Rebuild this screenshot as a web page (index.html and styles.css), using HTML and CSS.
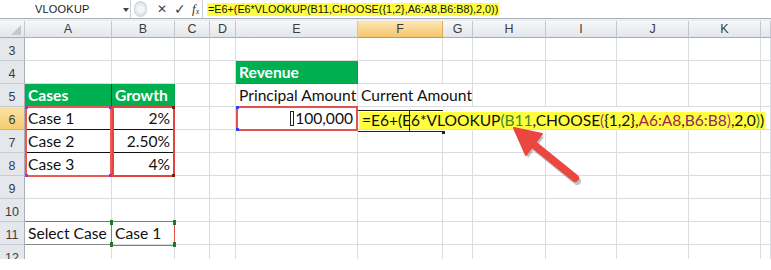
FILE: index.html
```html
<!DOCTYPE html>
<html>
<head>
<meta charset="utf-8">
<link rel="stylesheet" href="styles.css">
</head>
<body>
<div class="app">
  <div class="fbar">
    <div class="namebox"><span class="nm">VLOOKUP</span><span class="dd"></span></div>
    <div class="btns">
      <span class="grip"></span>
      <span class="b x">✕</span>
      <span class="b ok">✓</span>
      <span class="b fx"><i>f</i><sub>x</sub></span>
    </div>
    <div class="finput"><span class="hl">=E6+(E6*VLOOKUP(B11,CHOOSE({1,2},A6:A8,B6:B8),2,0))</span></div>
  </div>
  <div class="gapbar"></div>
  <div class="sheetwrap">
    <div class="sheet">
      <div class="ch corner"><span class="tri"></span></div><div class="ch">A</div><div class="ch">B</div><div class="ch">C</div><div class="ch">D</div><div class="ch">E</div><div class="ch sel">F</div><div class="ch">G</div><div class="ch">H</div><div class="ch">I</div><div class="ch">J</div><div class="ch">K</div><div class="ch"></div>

      <div class="rh">3</div><span></span><span></span><span></span><span></span><span></span><span></span><span></span><span></span><span></span><span></span><span></span><span></span>

      <div class="rh">4</div><span></span><span></span><span></span><span></span><div class="g">Revenue</div><span></span><span></span><span></span><span></span><span></span><span></span><span></span>

      <div class="rh">5</div><div class="g gb">Cases</div><div class="g">Growth</div><span></span><span></span><div class="t clip">Principal Amount</div><div class="t over">Current Amount</div><span></span><span></span><span></span><span></span><span></span><span></span>

      <div class="rh sel">6</div><div class="t bk">Case 1</div><div class="t r bk">2%</div><span></span><span></span><div class="t r"><span class="box"></span>100,000</div><span class="nr"></span><span class="nr"></span><span class="nr"></span><span class="nr"></span><span class="nr"></span><span></span><span></span>

      <div class="rh">7</div><div class="t bk">Case 2</div><div class="t r bk">2.50%</div><span></span><span></span><span></span><span></span><span></span><span></span><span></span><span></span><span></span><span></span>

      <div class="rh">8</div><div class="t">Case 3</div><div class="t r">4%</div><span></span><span></span><span></span><span></span><span></span><span></span><span></span><span></span><span></span><span></span>

      <div class="rh">9</div><span></span><span></span><span></span><span></span><span></span><span></span><span></span><span></span><span></span><span></span><span></span><span></span>

      <div class="rh">10</div><span></span><span></span><span></span><span></span><span></span><span></span><span></span><span></span><span></span><span></span><span></span><span></span>

      <div class="rh">11</div><div class="t sc">Select Case</div><div class="t">Case 1</div><span></span><span></span><span></span><span></span><span></span><span></span><span></span><span></span><span></span><span></span>

      <div class="rh last">12</div><span></span><span></span><span></span><span></span><span></span><span></span><span></span><span></span><span></span><span></span><span></span><span></span>
    </div>

    <div class="overlay">
      <div class="rng ra"><i class="k tl pu"></i><i class="k tr pu"></i><i class="k bl pu"></i><i class="k br pu"></i></div>
      <div class="rng rb"><i class="k tr dr"></i><i class="k br dr"></i></div>
      <div class="rng re"><i class="k tl bl2"></i><i class="k bl bl2"></i></div>
      <div class="rng r11"><i class="k tl gr"></i><i class="k bl gr"></i><i class="k tr gr"></i><i class="k br gr"></i></div>
      <div class="edit"><span class="cur"></span><span class="hdl"></span></div>
      <div class="fcell"><span class="fy">=E6+(E6*VLOOKUP<span class="cg">(B11</span>,CHOOSE<span class="cm">(</span>{1,2},<span class="cr">A6:A8</span>,<span class="cp">B6:B8</span><span class="cm">)</span>,2,0<span class="cg">)</span>)</span></div>
    </div>

    <svg class="arrow" width="771" height="270" viewBox="0 22 771 270">
      <g opacity="0.35" transform="translate(2,3)">
        <line x1="533" y1="145" x2="575" y2="179" stroke="#555" stroke-width="8" stroke-linecap="round"/>
        <polygon points="514,129 542,135 526,156" fill="#555"/>
      </g>
      <line x1="533" y1="145" x2="575" y2="179" stroke="#e9473f" stroke-width="8" stroke-linecap="round"/>
      <polygon points="514,129 542,135 526,156" fill="#e9473f" stroke="#e9473f" stroke-width="2" stroke-linejoin="round"/>
    </svg>
  </div>
</div>
</body>
</html>
```

FILE: styles.css
```css
* { box-sizing: border-box; }
html, body { margin: 0; padding: 0; background: #fff; }
.app { width: 771px; height: 270px; overflow: hidden; background: #fff; position: relative; }

.fbar {
  height: 19px;
  display: flex;
  border-bottom: 1px solid #a9b0b9;
  background: #fff;
  font-family: "Liberation Sans", Arial, sans-serif;
}
.namebox {
  width: 131px;
  display: flex;
  align-items: center;
  border-right: 1px solid #c9ced5;
  position: relative;
}
.nm { margin-left: 35px; font-size: 11px; color: #222; letter-spacing: 0.2px; }
.dd {
  position: absolute; left: 123px; top: 8px;
  width: 0; height: 0;
  border-left: 3.5px solid transparent; border-right: 3.5px solid transparent;
  border-top: 4px solid #444;
}
.btns {
  width: 72px;
  display: flex;
  align-items: center;
  border-right: 1px solid #c9ced5;
  position: relative;
}
.grip {
  width: 13px; height: 16px; margin-left: 3px;
  border-radius: 8px;
  background: radial-gradient(circle at 50% 50%, #f4f5f6 30%, #d9dcdf 80%);
  border: 1px solid #cfd3d7;
}
.b { color: #444; font-size: 13px; }
.x { margin-left: 10px; font-size: 12px; }
.ok { margin-left: 7px; font-size: 14px; }
.fx { margin-left: 6px; font-family: "Liberation Serif", serif; font-size: 13px; color: #333; }
.fx sub { font-size: 8px; font-style: italic; vertical-align: -1px; }
.finput { flex: 1; display: flex; align-items: center; padding-left: 4px; }
.hl {
  background: #ffff3f;
  font-family: "Liberation Sans", Arial, sans-serif;
  font-size: 10.8px;
  line-height: 13px;
  color: #111;
  padding: 0 1px;
}
.gapbar { height: 2px; background: #eceef1; }

.sheetwrap { position: relative; height: 238px; overflow: hidden; }
.sheet, .overlay {
  display: grid;
  grid-template-columns: 25px 87px 63px 35px 26px 122px 85px 30px 73px 71px 72px 72px 1fr;
  grid-template-rows: 17px repeat(10, 23px);
  font-family: Lato, "Open Sans", sans-serif;
}
.overlay { position: absolute; inset: 0; pointer-events: none; }

.sheet > span, .sheet > div {
  border-right: 1px solid #dadcdf;
  border-bottom: 1px solid #dadcdf;
  min-width: 0;
}
.sheet > .ch {
  background: linear-gradient(#f6f7f9, #e2e6ea);
  border-right: 1px solid #c3c8cf;
  border-bottom: 1px solid #a7aeb8;
  color: #3c3c3c;
  font-size: 12.5px;
  display: flex; align-items: center; justify-content: center;
  font-family: "Liberation Sans", Arial, sans-serif;
}
.sheet > .ch.sel {
  background: linear-gradient(#fde7b2, #f7c56e);
  border-right-color: #e3aa52;
  border-bottom-color: #d7952f;
}
.corner { position: relative; }
.tri {
  position: absolute; right: 3px; bottom: 2px;
  width: 0; height: 0;
  border-left: 10px solid transparent;
  border-bottom: 10px solid #c4c9d0;
}
.sheet > .rh {
  background: #e4e7ec;
  border-right: 1px solid #a7aeb8;
  border-bottom: 1px solid #c6cbd2;
  color: #3c3c3c;
  font-size: 12.5px;
  font-family: "Liberation Sans", Arial, sans-serif;
  display: flex; align-items: center; justify-content: center;
  padding-top: 3px;
}
.sheet > .rh.last { align-items: flex-start; padding-top: 6px; }
.sheet > .rh.sel { background: linear-gradient(#fbe2a4, #f5cd6c); border-bottom-color: #e0b055; }

.t {
  font-size: 15.6px;
  color: #111;
  display: flex; align-items: flex-end;
  padding: 0 2px 1px 3px;
  white-space: nowrap;
  line-height: 20px;
}
.t.r { justify-content: flex-end; padding-right: 4px; }
.clip { overflow: hidden; }
.over { overflow: visible; border-right-color: transparent !important; position: relative; z-index: 1; }
.g {
  background: #00b050;
  color: #fff;
  font-weight: bold;
  font-size: 15.6px;
  display: flex; align-items: flex-end;
  padding: 0 2px 1px 3px;
  line-height: 20px;
  border-right: 1px solid #00a149 !important;
  border-bottom: 1px solid #00a149 !important;
}
.gb { border-right: 1px solid #1a4a2a !important; }
.bk { border-bottom: 1px solid #111 !important; }
.sc { border-top: 1px solid #777; border-bottom: 1px solid #888 !important; margin-top: -1px; }
.nr { border-right-color: transparent !important; }
.box {
  display: inline-block; width: 4px; height: 15px;
  border: 1px solid #222; margin-right: 1px; margin-bottom: 2px;
}

.rng { position: relative; }
.ra { grid-column: 2; grid-row: 5 / 8; border: 2px solid #ea5a54; margin: -1px 0 -1px 0; }
.rb { grid-column: 3; grid-row: 5 / 8; border: 2px solid #e2443f; margin: -1px 0 -1px 0; }
.re { grid-column: 6; grid-row: 5; border: 2px solid #e4524d; margin: -1px 0 -1px 0; }
.r11 { grid-column: 3; grid-row: 10; border: 1.5px solid #e4524d; margin: -1px 0 -1px -1px; }
.k { position: absolute; width: 3px; height: 3px; }
.tl { left: -2px; top: -2px; }
.tr { right: -2px; top: -2px; }
.bl { left: -2px; bottom: -2px; }
.br { right: -2px; bottom: -2px; }
.pu { background: #9a38c8; }
.dr { background: #7a1f1f; }
.bl2 { background: #3b3bf0; }
.gr { background: #1d7a2a; width: 3px; height: 5px; }

.edit {
  grid-column: 7; grid-row: 5;
  border-top: 1px solid #222;
  border-bottom: 1px solid #222;
  margin: 3px 0 -2px 0;
  position: relative;
}
.cur { position: absolute; left: 51px; top: 0; bottom: 0; width: 1px; background: #222; z-index: 3; }
.hdl { position: absolute; right: -2px; bottom: -3px; width: 3px; height: 3px; background: #222; }
.fcell {
  grid-column: 7 / 13; grid-row: 5;
  display: flex; align-items: center;
  padding-top: 3px;
  white-space: nowrap;
  position: relative; z-index: 2;
}
.fy {
  background: #ffff40;
  font-size: 15.6px;
  color: #111;
  line-height: 17px;
  padding: 0 1px 0 3px;
  margin-left: 1px;
  letter-spacing: -0.05px;
}
.cg { color: #3a8a28; }
.cm { color: #b23a86; }
.cr { color: #a3264d; }
.cp { color: #8b2b63; }

.arrow { position: absolute; left: 0; top: 0; pointer-events: none; z-index: 5; }
```
